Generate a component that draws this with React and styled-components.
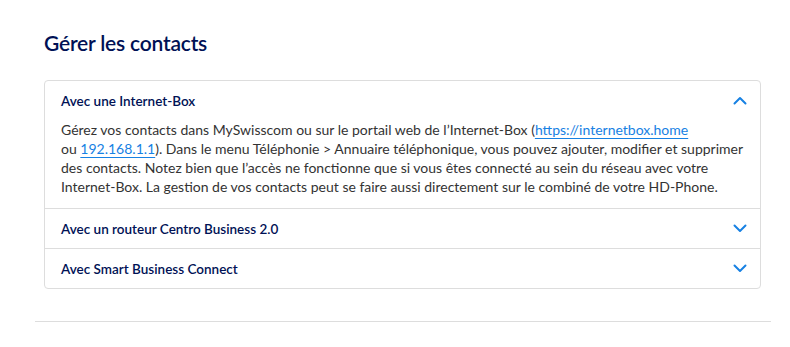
import React, { useState } from 'react'
import styled, { createGlobalStyle } from 'styled-components'

const GlobalStyle = createGlobalStyle`
  body {
    margin: 0;
    background: #ffffff;
    font-family: "Lato", "Open Sans", sans-serif;
  }
`

const Page = styled.div`
  padding: 29px 19px 0 35px;
  width: 790px;
  box-sizing: border-box;
`

const Section = styled.section`
  padding: 0 10px 0 9px;
`

const Title = styled.h2`
  margin: 0 0 24px 0;
  font-size: 21px;
  line-height: 27px;
  font-weight: 600;
  color: #001155;
  letter-spacing: -0.2px;
`

const Accordion = styled.div`
  border: 1px solid #dddddd;
  border-radius: 4px;
`

const Item = styled.div`
  & + & {
    border-top: 1px solid #dddddd;
  }
`

const Header = styled.button`
  display: flex;
  align-items: center;
  justify-content: space-between;
  width: 100%;
  height: 39px;
  padding: 0 13px 0 16px;
  border: 0;
  background: transparent;
  cursor: pointer;
  font-family: inherit;
  font-size: 13.5px;
  font-weight: 600;
  color: #001155;
  text-align: left;
`

const Body = styled.div`
  padding: 0 14px 12px 16px;
  font-size: 14px;
  line-height: 19px;
  color: #333333;
`

const Link = styled.a`
  color: #1781e3;
  text-decoration: underline;
  text-underline-offset: 3px;
`

const Divider = styled.hr`
  margin: 32px 0 0 0;
  border: 0;
  border-top: 1px solid #dddddd;
`

const Chevron = ({ up }) => (
  <svg width="14" height="9" viewBox="0 0 14 9" style={{ transform: up ? 'rotate(180deg)' : 'none' }}>
    <path d="M1.5 1.5 L7 7 L12.5 1.5" fill="none" stroke="#1781e3" strokeWidth="2" strokeLinecap="round" strokeLinejoin="round" />
  </svg>
)

const items = [
  { title: 'Avec une Internet-Box' },
  { title: 'Avec un routeur Centro Business 2.0' },
  { title: 'Avec Smart Business Connect' },
]

const App = () => {
  const [open, setOpen] = useState(0)
  return (
    <Page>
      <GlobalStyle />
      <Section>
        <Title>Gérer les contacts</Title>
        <Accordion>
          {items.map((it, i) => (
            <Item key={it.title}>
              <Header onClick={() => setOpen(open === i ? -1 : i)}>
                {it.title}
                <Chevron up={open === i} />
              </Header>
              {open === i && i === 0 && (
                <Body>
                  Gérez vos contacts dans MySwisscom ou sur le portail web de l’Internet-Box (
                  <Link href="#">https://internetbox.home</Link>
                  <br />
                  ou <Link href="#">192.168.1.1</Link>). Dans le menu Téléphonie &gt; Annuaire téléphonique, vous
                  pouvez ajouter, modifier et supprimer des contacts. Notez bien que l’accès ne fonctionne que si vous
                  êtes connecté au sein du réseau avec votre Internet-Box. La gestion de vos contacts peut se faire
                  aussi directement sur le combiné de votre HD-Phone.
                </Body>
              )}
            </Item>
          ))}
        </Accordion>
      </Section>
      <Divider />
    </Page>
  )
}

export default App
